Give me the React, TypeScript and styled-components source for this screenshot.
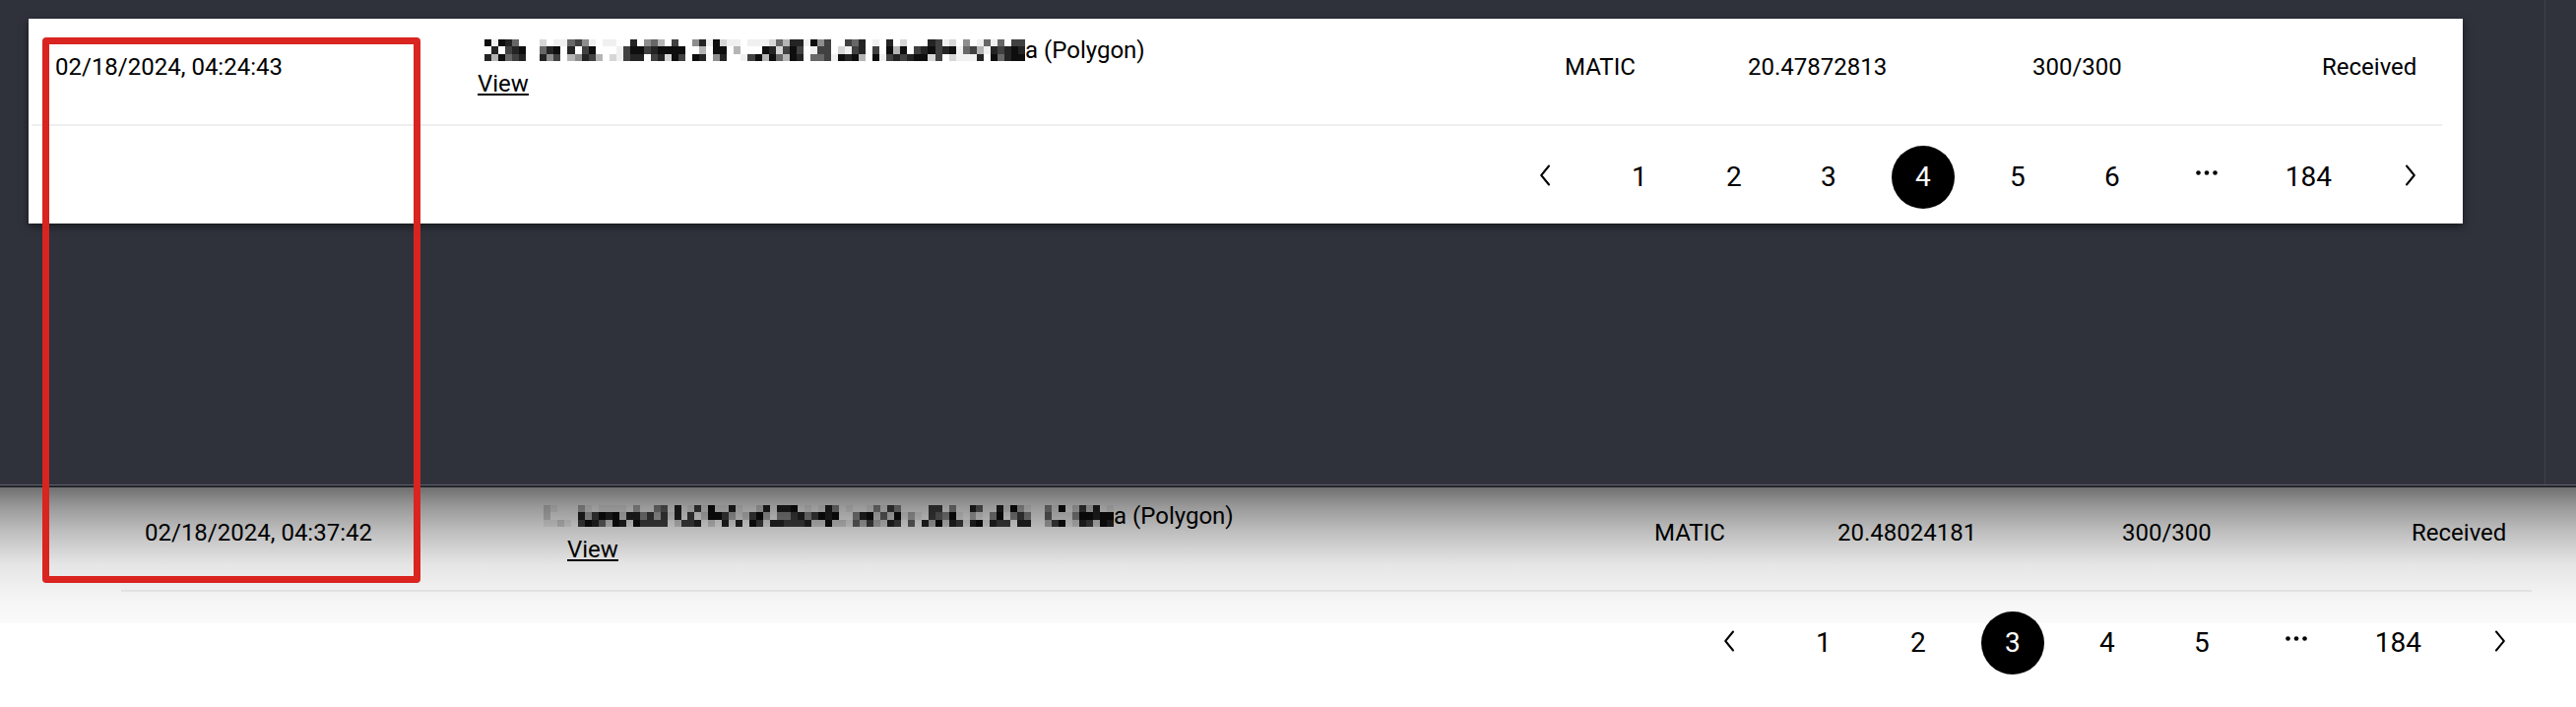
import React from "react";
import styled, { createGlobalStyle } from "styled-components";

const GlobalStyle = createGlobalStyle`
  html, body { margin: 0; padding: 0; background: #2f323b; }
  body { font-family: Roboto, "Liberation Sans", Arial, sans-serif; }
  #root { width: 2616px; height: 718px; }
`;

const Page = styled.div`
  position: relative;
  width: 2616px;
  height: 718px;
  overflow: hidden;
  display: flex;
  flex-direction: column;
  font-family: Roboto, "Liberation Sans", Arial, sans-serif;
  color: #000;
`;

const TopArea = styled.div`
  display: flex;
  height: 492px;
  flex: none;
  background: #2f323b;
`;

const Workspace = styled.div`
  flex: 1;
  padding: 19px 0 0 29px;
`;

const SideRail = styled.div`
  width: 31px;
  border-left: 1px solid #3e4149;
  background: #30333b;
`;

const Seam = styled.div`
  flex: none;
  height: 0;
  border-top: 1px solid #5f626a;
  border-bottom: 2px solid #23252a;
`;

const BottomArea = styled.div`
  position: relative;
  flex: 1;
  background: #ffffff;
  padding-left: 123px;
`;

const Shade = styled.div`
  position: absolute;
  left: 0;
  right: 0;
  top: 0;
  height: 138px;
  pointer-events: none;
  background: linear-gradient(
    to bottom,
    rgba(0, 0, 0, 0.56) 0px,
    rgba(0, 0, 0, 0.4) 20px,
    rgba(0, 0, 0, 0.26) 44px,
    rgba(0, 0, 0, 0.1) 78px,
    rgba(0, 0, 0, 0.035) 117px,
    rgba(0, 0, 0, 0.025) 137px,
    rgba(0, 0, 0, 0) 138px
  );
`;

const Card = styled.div`
  width: 2472px;
  box-sizing: border-box;
  padding: 0 21px 0 3px;
  background: #ffffff;
  box-shadow: 0 3px 8px rgba(0, 0, 0, 0.5);
`;

const TableBlock = styled.div`
  width: 2448px;
`;

const Row = styled.div<{ $padTop: number }>`
  display: grid;
  grid-template-columns: 429px 1104px 186px 289px 294px 146px;
  align-items: center;
  padding: ${(p) => p.$padTop}px 0 24px;
  border-bottom: 2px solid #eeeeee;
  font-size: 24px;
  line-height: 34px;
`;

const Cell = styled.div`
  padding-left: 24px;
  white-space: nowrap;
`;

const AddressLine = styled.div`
  white-space: nowrap;
`;

const ViewLink = styled.a`
  color: #000;
  text-decoration: underline;
  text-decoration-thickness: 2px;
  text-underline-offset: 2px;
  cursor: pointer;
`;

const MosaicSvg = styled.svg<{ $bleed: number }>`
  display: inline-block;
  vertical-align: -3px;
  margin-left: ${(p) => -p.$bleed}px;
`;

const Pager = styled.nav`
  display: flex;
  justify-content: flex-end;
  gap: 32px;
  padding: 20px 0 15px;
`;

const PageItem = styled.span<{ $active?: boolean }>`
  min-width: 64px;
  height: 64px;
  box-sizing: border-box;
  padding: 0 16px;
  display: flex;
  align-items: center;
  justify-content: center;
  border-radius: 32px;
  font-size: 28px;
  line-height: 28px;
  background: ${(p) => (p.$active ? "#000" : "transparent")};
  color: ${(p) => (p.$active ? "#fff" : "#000")};
`;

const Chevron = styled.svg`
  margin-bottom: 5px;
`;

const Dots = styled.svg`
  margin-bottom: 10px;
`;

const Annotation = styled.div`
  position: absolute;
  left: 43px;
  top: 38px;
  width: 384px;
  height: 554px;
  box-sizing: border-box;
  border: 7px solid #d92420;
  border-radius: 4px;
  pointer-events: none;
`;

function rng(seed: number) {
  let s = seed >>> 0;
  return () => {
    s = (Math.imul(s, 1664525) + 1013904223) >>> 0;
    return s / 4294967296;
  };
}

const SHADES = [
  "#ffffff",
  "#f0f0f0",
  "#d6d6d6",
  "#b5b5b5",
  "#8e8e8e",
  "#676767",
  "#414141",
  "#242424",
  "#0e0e0e",
];

type MosaicProps = { width: number; seed: number; bleed?: number; fade?: number };

function pickShade(r: () => number, dark: number) {
  const x = r();
  if (x < dark) return 6 + r() * 3;
  if (x < dark + 0.25) return 2 + r() * 4;
  return r() * 1.5;
}

function Mosaic({ width, seed, bleed = 0, fade = 0 }: MosaicProps) {
  const cols = Math.round(width / 7);
  const cw = width / cols;
  const rh = 22 / 3;
  const r = rng(seed);
  const cells: { x: number; y: number; fill: string }[] = [];
  for (let c = 0; c < cols; c++) {
    const kind = r();
    for (let row = 0; row < 3; row++) {
      let v: number;
      if (kind < 0.35) v = pickShade(r, 0.6);
      else if (kind < 0.86) v = row === 0 ? pickShade(r, 0.12) : pickShade(r, row === 1 ? 0.55 : 0.65);
      else v = r() * 1.5;
      if (c >= cols - 2 && row > 0) v = 7 + r() * 2;
      if (c < fade) v = Math.min(v, 1 + r() * 2);
      cells.push({ x: c * cw, y: row * rh, fill: SHADES[Math.min(8, Math.floor(v))] });
    }
  }
  return (
    <MosaicSvg
      $bleed={bleed}
      width={width}
      height={22}
      viewBox={`0 0 ${width} 22`}
      shapeRendering="crispEdges"
    >
      {cells.map((cell, i) => (
        <rect key={i} x={cell.x} y={cell.y} width={cw + 0.3} height={rh + 0.3} fill={cell.fill} />
      ))}
    </MosaicSvg>
  );
}

const ChevronLeft = () => (
  <Chevron width="12" height="22" viewBox="0 0 12 22" fill="none">
    <path d="M10 1.5 L2.2 11 L10 20.5" stroke="#000" strokeWidth="2" strokeLinecap="round" strokeLinejoin="round" />
  </Chevron>
);

const ChevronRight = () => (
  <Chevron width="12" height="22" viewBox="0 0 12 22" fill="none">
    <path d="M2 1.5 L9.8 11 L2 20.5" stroke="#000" strokeWidth="2" strokeLinecap="round" strokeLinejoin="round" />
  </Chevron>
);

const Ellipsis = () => (
  <Dots width="22" height="5" viewBox="0 0 22 5">
    <circle cx="2.5" cy="2.5" r="2.3" fill="#000" />
    <circle cx="11" cy="2.5" r="2.3" fill="#000" />
    <circle cx="19.5" cy="2.5" r="2.3" fill="#000" />
  </Dots>
);

type Tx = {
  date: string;
  currency: string;
  amount: string;
  confirmations: string;
  status: string;
};

type BlockProps = {
  tx: Tx;
  pages: number[];
  active: number;
  last: number;
  padTop: number;
  mosaicWidth: number;
  mosaicBleed?: number;
  mosaicFade?: number;
  seed: number;
};

function TxBlock({ tx, pages, active, last, padTop, mosaicWidth, mosaicBleed, mosaicFade, seed }: BlockProps) {
  return (
    <TableBlock>
      <Row $padTop={padTop}>
        <Cell>{tx.date}</Cell>
        <Cell>
          <AddressLine>
            <Mosaic width={mosaicWidth} seed={seed} bleed={mosaicBleed} fade={mosaicFade} />a (Polygon)
          </AddressLine>
          <ViewLink>View</ViewLink>
        </Cell>
        <Cell>{tx.currency}</Cell>
        <Cell>{tx.amount}</Cell>
        <Cell>{tx.confirmations}</Cell>
        <Cell>{tx.status}</Cell>
      </Row>
      <Pager>
        <PageItem>
          <ChevronLeft />
        </PageItem>
        {pages.map((p) => (
          <PageItem key={p} $active={p === active}>
            {p}
          </PageItem>
        ))}
        <PageItem>
          <Ellipsis />
        </PageItem>
        <PageItem>{last}</PageItem>
        <PageItem>
          <ChevronRight />
        </PageItem>
      </Pager>
    </TableBlock>
  );
}

export default function App() {
  return (
    <Page>
      <GlobalStyle />
      <TopArea>
        <Workspace>
          <Card>
            <TxBlock
              tx={{
                date: "02/18/2024, 04:24:43",
                currency: "MATIC",
                amount: "20.47872813",
                confirmations: "300/300",
                status: "Received",
              }}
              pages={[1, 2, 3, 4, 5, 6]}
              active={4}
              last={184}
              padTop={15}
              mosaicWidth={556}
              seed={7}
            />
          </Card>
        </Workspace>
        <SideRail />
      </TopArea>
      <Seam />
      <BottomArea>
        <TxBlock
          tx={{
            date: "02/18/2024, 04:37:42",
            currency: "MATIC",
            amount: "20.48024181",
            confirmations: "300/300",
            status: "Received",
          }}
          pages={[1, 2, 3, 4, 5]}
          active={3}
          last={184}
          padTop={12}
          mosaicWidth={579}
          mosaicBleed={24}
          mosaicFade={4}
          seed={31}
        />
        <Shade />
      </BottomArea>
      <Annotation />
    </Page>
  );
}
